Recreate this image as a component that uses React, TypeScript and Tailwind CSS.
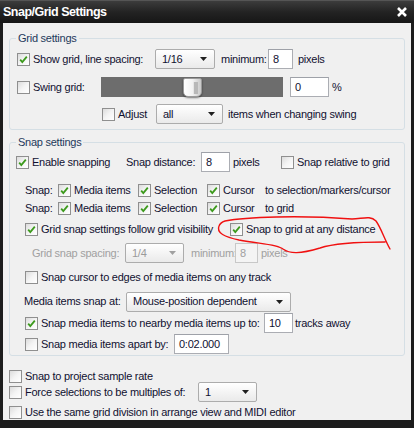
import type { ReactNode } from 'react';

type BoxProps = { checked?: boolean };

// classic themed checkbox, 13x13
function CheckBox({ checked = false }: BoxProps) {
  return (
    <span className="relative inline-flex w-[13px] h-[13px] shrink-0 border border-[#8f8f8f] bg-gradient-to-br from-[#dcdcdc] via-[#f4f4f4] to-white">
      {checked && (
        <svg viewBox="0 0 11 11" className="absolute inset-0 w-[11px] h-[11px]">
          <path d="M2.2 5.6 L4.3 8 L8.8 2.6" fill="none" stroke="#3c9a1c" strokeWidth="1.8" />
        </svg>
      )}
    </span>
  );
}

function Select({ value, w, muted = false }: { value: string; w: string; muted?: boolean }) {
  return (
    <div
      className={`${w} h-[20px] shrink-0 flex items-center justify-between pl-[6px] pr-[7px] rounded-[2px] border border-[#acacac] bg-gradient-to-b from-white to-[#eaeaea] ${muted ? 'text-[#9a9a9a]' : ''}`}
    >
      <span>{value}</span>
      <svg viewBox="0 0 7 4" className="w-[7px] h-[4px]">
        <path d="M0 0 H7 L3.5 4 Z" fill={muted ? '#a0a0a0' : '#202020'} />
      </svg>
    </div>
  );
}

function Field({ value, w, muted = false }: { value: string; w: string; muted?: boolean }) {
  return (
    <div
      className={`${w} h-[20px] shrink-0 flex items-center pl-[4px] border ${muted ? 'text-[#a0a0a0] bg-[#f4f4f4] border-[#c8c8c8]' : 'bg-white border-[#abadb3] border-t-[#9ea1a8]'}`}
    >
      {value}
    </div>
  );
}

function Opt({ checked, children, w }: { checked?: boolean; children: ReactNode; w?: string }) {
  return (
    <div className={`flex items-center gap-[3px] shrink-0 ${w ?? ''}`}>
      <CheckBox checked={checked} />
      <span>{children}</span>
    </div>
  );
}

function Group({ title, children, className }: { title: string; children: ReactNode; className: string }) {
  return (
    <fieldset className={`ml-[6px] w-[396px] border border-[#d5dfe5] rounded-[3px] ${className}`}>
      <legend className="ml-[6px] px-[2px] leading-[14px] text-[#1e395b]">{title}</legend>
      {children}
    </fieldset>
  );
}

function SnapRow() {
  return (
    <>
      <span className="w-[33px] shrink-0">Snap:</span>
      <Opt checked w="w-[80px]">Media items</Opt>
      <Opt checked w="w-[69px]">Selection</Opt>
      <Opt checked w="w-[58px]">Cursor</Opt>
    </>
  );
}

export default function App() {
  return (
    <div
      className="w-[414px] h-[428px] bg-[#1c1c1c] flex flex-col text-[11px] tracking-[-0.25px] text-[#101030] whitespace-nowrap overflow-hidden"
      style={{ fontFamily: '"Liberation Sans", Arial, sans-serif' }}
    >
      {/* title bar */}
      <div className="h-[23px] shrink-0 flex items-center justify-between pl-[3px] pr-[6px] bg-gradient-to-b from-[#3c3c3c] via-[#232323] to-[#161616] border-t border-[#555]">
        <span className="text-white font-bold text-[12.5px] tracking-[-0.5px]">Snap/Grid Settings</span>
        <svg viewBox="0 0 12 10" className="w-[12px] h-[10px]">
          <path d="M2 1 L10 9 M10 1 L2 9" stroke="#fff" strokeWidth="2.6" />
        </svg>
      </div>

      {/* dialog body */}
      <div className="relative h-[397px] mx-[3px] bg-[#f0f0f0] flex flex-col pt-[8px]">
        <Group title="Grid settings" className="pb-[5px]">
          <div className="mt-[4px] h-[20px] flex items-center pl-[7px]">
            <Opt checked w="w-[138px]">Show grid, line spacing:</Opt>
            <Select value="1/16" w="w-[60px]" />
            <span className="ml-[6px] w-[47px] shrink-0">minimum:</span>
            <Field value="8" w="w-[25px]" />
            <span className="ml-[5px]">pixels</span>
          </div>

          <div className="mt-[8px] h-[20px] flex items-center pl-[7px]">
            <Opt w="w-[84px]">Swing grid:</Opt>
            <div className="w-[182px] h-[20px] shrink-0 bg-[#6d6d6d] flex items-start pl-[82px]">
              <div className="mt-[1px] w-[19px] h-[19px] rounded-b-[5px] rounded-t-[2px] flex border border-[#9a9a9a] bg-gradient-to-r from-white via-[#f2f2f2] to-[#c8c8c8] shadow-[0_1px_2px_rgba(0,0,0,0.5)]">
                <div className="ml-[9px] mt-[3px] w-[5px] h-[12px] bg-[#b8b8b8] border-l border-[#e6e6e6]" />
              </div>
            </div>
            <div className="ml-[7px]">
              <Field value="0" w="w-[39px]" />
            </div>
            <span className="ml-[3px]">%</span>
          </div>

          <div className="mt-[7px] h-[20px] flex items-center pl-[92px]">
            <Opt w="w-[54px]">Adjust</Opt>
            <Select value="all" w="w-[67px]" />
            <span className="ml-[5px]">items when changing swing</span>
          </div>
        </Group>

        <Group title="Snap settings" className="mt-[5px] pb-[1px]">
          <div className="mt-[3px] h-[20px] flex items-center pl-[6px]">
            <Opt checked w="w-[110px]">Enable snapping</Opt>
            <span className="w-[75px] shrink-0">Snap distance:</span>
            <Field value="8" w="w-[29px]" />
            <span className="ml-[3px] w-[48px] shrink-0">pixels</span>
            <Opt>Snap relative to grid</Opt>
          </div>

          <div className="mt-[10px] h-[16px] flex items-center pl-[15px]">
            <SnapRow />
            <span>to selection/markers/cursor</span>
          </div>
          <div className="mt-[2px] h-[16px] flex items-center pl-[15px]">
            <SnapRow />
            <span>to grid</span>
          </div>

          <div className="mt-[5px] h-[16px] flex items-center pl-[15px]">
            <Opt checked w="w-[205px]">Grid snap settings follow grid visibility</Opt>
            <Opt checked>Snap to grid at any distance</Opt>
          </div>

          <div className="mt-[6px] h-[20px] flex items-center pl-[22px] text-[#a0a0a0]">
            <span className="w-[93px] shrink-0">Grid snap spacing:</span>
            <Select value="1/4" w="w-[59px]" muted />
            <span className="ml-[7px] w-[44px] shrink-0">minimum:</span>
            <Field value="8" w="w-[23px]" muted />
            <span className="ml-[3px]">pixels</span>
          </div>

          <div className="mt-[6px] h-[16px] flex items-center pl-[15px]">
            <Opt>Snap cursor to edges of media items on any track</Opt>
          </div>

          <div className="mt-[7px] h-[19px] flex items-center pl-[14px]">
            <span className="w-[102px] shrink-0">Media items snap at:</span>
            <Select value="Mouse-position dependent" w="w-[165px]" />
          </div>

          <div className="mt-[2px] h-[20px] flex items-center pl-[15px]">
            <Opt checked w="w-[239px]">Snap media items to nearby media items up to:</Opt>
            <Field value="10" w="w-[29px]" />
            <span className="ml-[2px]">tracks away</span>
          </div>

          <div className="mt-[1px] h-[20px] flex items-center pl-[15px]">
            <Opt w="w-[149px]">Snap media items apart by:</Opt>
            <Field value="0:02.000" w="w-[55px]" />
          </div>
        </Group>

        <div className="mt-[12px] h-[16px] flex items-center pl-[6px]">
          <Opt>Snap to project sample rate</Opt>
        </div>
        <div className="h-[16px] flex items-center pl-[6px]">
          <Opt w="w-[189px]">Force selections to be multiples of:</Opt>
          <Select value="1" w="w-[59px]" />
        </div>
        <div className="mt-[4px] h-[16px] flex items-center pl-[6px]">
          <Opt>Use the same grid division in arrange view and MIDI editor</Opt>
        </div>

        {/* red marker scribble drawn over the dialog */}
        <svg className="absolute left-[-3px] top-[-23px] w-[414px] h-[428px] pointer-events-none" viewBox="0 0 414 428">
          <path
            d="M225 221 C245 217 300 215 352 219 C362 219 370 215 376 221 C381 228 384 238 390 249 M385 242 C365 242 335 243 320 248 C300 254 290 254 283 249 C277 244 260 244 239 240 C225 237 216 233 219 226 C220 223 222 222 225 221"
            fill="none"
            stroke="#f01010"
            strokeWidth="1.4"
            strokeLinecap="round"
          />
        </svg>
      </div>
    </div>
  );
}
